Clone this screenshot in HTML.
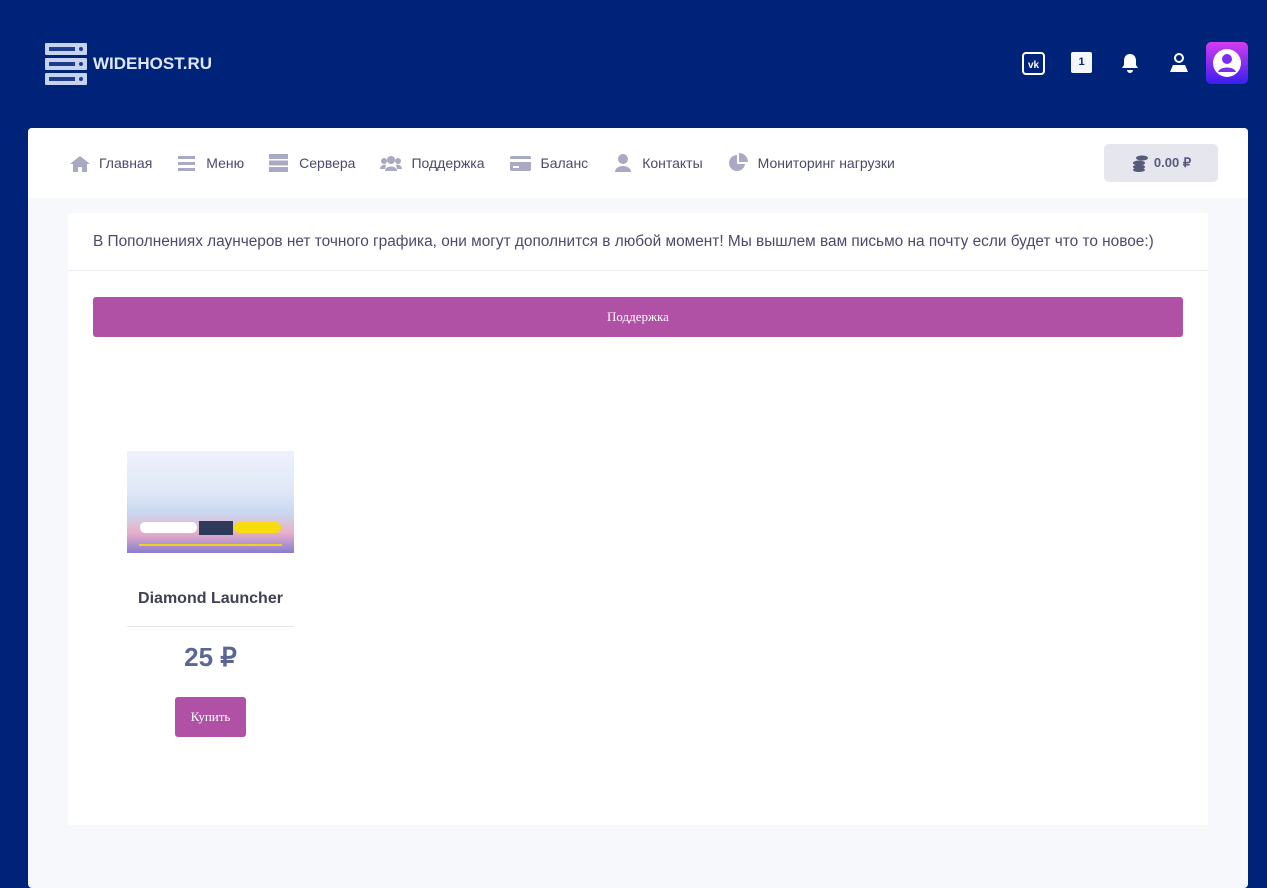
<!DOCTYPE html>
<html><head><meta charset="utf-8"><style>
*{box-sizing:border-box;margin:0;padding:0}
body{width:1267px;height:864px;background:#00237a;font-family:"Liberation Sans",sans-serif;position:relative;overflow:hidden}
.logo{position:absolute;left:45px;top:43px;display:flex;align-items:center}
.logo span{color:#dfe6f7;font-size:17px;font-weight:bold;margin-left:4px;letter-spacing:0}
.panel{position:absolute;left:28px;top:128px;width:1220px;height:760px;background:#f7f8fc;border-radius:4px}
.nav{height:70px;background:#fff;border-radius:4px 4px 0 0;display:flex;align-items:center;padding-left:42px}
.nav .it{display:flex;align-items:center;color:#4a4a6a;font-size:14px;margin-right:25px;white-space:nowrap}
.nav .it svg{margin-right:9px}
.bal{position:absolute;right:30px;top:16px;width:114px;height:38px;background:#e5e6ee;border-radius:5px;color:#575a7b;font-weight:bold;font-size:13px;display:flex;align-items:center;justify-content:center}
.card1{position:absolute;left:40px;top:85px;width:1140px;height:149px;background:#fff;border-radius:3px}
.card1 .t{height:58px;border-bottom:1px solid #ebedf2;padding:20px 25px;color:#4a4a6a;font-size:15.4px;white-space:nowrap}
.btn{position:absolute;left:25px;top:84px;width:1090px;height:40px;background:#b151a5;border-radius:3px;color:#fff;font-family:"Liberation Serif",serif;font-size:13px;text-align:center;line-height:40px}
.card2{position:absolute;left:40px;top:234px;width:1140px;height:463px;background:#fff}
.shot{position:absolute;left:59px;top:89px;width:167px;height:102px;background:linear-gradient(180deg,#eef1fb 0%,#dfe8f7 40%,#c8d8f0 60%,#e8b0c8 80%,#8a7cd0 100%)}
</style></head><body>
<div class="logo">
<svg width="44" height="42" viewBox="0 0 44 42"><g fill="#c6d3ef"><rect x="0" y="0" width="42" height="12" rx="1"/><rect x="0" y="15" width="42" height="12" rx="1"/><rect x="0" y="30" width="42" height="12" rx="1"/></g><g fill="#1f3b8c"><rect x="4" y="4" width="26" height="4"/><rect x="4" y="19" width="26" height="4"/><rect x="4" y="34" width="26" height="4"/><circle cx="36" cy="6" r="2"/><circle cx="36" cy="21" r="2"/><circle cx="36" cy="36" r="2"/></g></svg>
<span>WIDEHOST.RU</span></div>
<svg style="position:absolute;left:1022px;top:52px" width="23" height="23"><rect x="1" y="1" width="21" height="21" rx="3" fill="none" stroke="#fff" stroke-width="2"/><text x="11.5" y="16" font-size="10" font-weight="bold" fill="#fff" text-anchor="middle" font-family="Liberation Sans">vk</text></svg>
<div style="position:absolute;left:1071px;top:52px;width:21px;height:21px;background:#f4f6fb;border-radius:2px;color:#00237a;font-size:11px;font-weight:bold;text-align:center;line-height:21px">1</div>
<svg style="position:absolute;left:1121px;top:53px" width="18" height="20" viewBox="0 0 18 20"><path d="M9 1c-4 0-6 3-6 7v4l-2 3h16l-2-3V8c0-4-2-7-6-7z M6 17a3 3 0 0 0 6 0z" fill="#fff"/></svg>
<svg style="position:absolute;left:1169px;top:53px" width="20" height="20" viewBox="0 0 20 20"><circle cx="10" cy="5" r="4" fill="none" stroke="#fff" stroke-width="2"/><path d="M1 19l3-7h12l3 7z" fill="#fff"/></svg>
<div style="position:absolute;left:1206px;top:42px;width:42px;height:42px;border-radius:5px;background:linear-gradient(180deg,#d43cf0,#3a1ef0)"><svg width="42" height="42"><circle cx="21" cy="21" r="14" fill="#fff"/><circle cx="21" cy="17" r="5" fill="#7a2cf0"/><path d="M12 30c2-6 16-6 18 0z" fill="#7a2cf0"/></svg></div>
<div class="panel">
<div class="nav">
<div class="it"><svg width="20" height="17" viewBox="0 0 20 17"><path d="M10 1L0 9h3v8h5v-5h4v5h5V9h3z" fill="#a9a9c4"/></svg>Главная</div>
<div class="it"><svg width="20" height="16"><g fill="#a9a9c4"><rect x="1" y="1" width="17" height="3"/><rect x="1" y="7" width="17" height="3"/><rect x="1" y="13" width="17" height="3"/></g></svg>Меню</div>
<div class="it"><svg width="21" height="18"><g fill="#a9a9c4"><rect x="0" y="0" width="19" height="5"/><rect x="0" y="6.5" width="19" height="5"/><rect x="0" y="13" width="19" height="5"/></g></svg>Сервера</div>
<div class="it"><svg width="22" height="16"><g fill="#a9a9c4"><circle cx="11" cy="5" r="4"/><circle cx="4" cy="6" r="3"/><circle cx="18" cy="6" r="3"/><path d="M5 16c0-6 12-6 12 0zM0 14c0-4 5-5 6-4l-1 4zM22 14c0-4-5-5-6-4l1 4z"/></g></svg>Поддержка</div>
<div class="it"><svg width="22" height="16"><rect x="0" y="1" width="21" height="15" rx="2" fill="#a9a9c4"/><rect x="0" y="4" width="21" height="3" fill="#fff"/><rect x="3" y="11" width="6" height="2" fill="#fff"/></svg>Баланс</div>
<div class="it"><svg width="20" height="18"><circle cx="10" cy="5" r="5" fill="#a9a9c4"/><path d="M2 18c0-8 16-8 16 0z" fill="#a9a9c4"/></svg>Контакты</div>
<div class="it"><svg width="21" height="20"><path d="M9 2a8 8 0 1 0 8 9H9z" fill="#a9a9c4"/><path d="M11 0v9h9a9 9 0 0 0-9-9z" fill="#a9a9c4"/></svg>Мониторинг нагрузки</div>
<div class="bal"><svg width="18" height="18" style="margin-right:5px"><g fill="#575a7b"><ellipse cx="11" cy="4" rx="6" ry="2.5"/><ellipse cx="8" cy="9" rx="6" ry="2.5"/><ellipse cx="8" cy="13" rx="6" ry="2.5"/><ellipse cx="8" cy="16" rx="6" ry="2"/></g></svg>0.00 ₽</div>
</div>
<div class="card1"><div class="t">В Пополнениях лаунчеров нет точного графика, они могут дополнится в любой момент! Мы вышлем вам письмо на почту если будет что то новое:)</div><div class="btn">Поддержка</div></div>
<div class="card2">
<div class="shot"><div style="position:absolute;left:13px;top:71px;width:57px;height:11px;background:#fff;border-radius:5px"></div><div style="position:absolute;left:72px;top:70px;width:34px;height:14px;background:#2f3a5a"></div><div style="position:absolute;left:107px;top:71px;width:47px;height:11px;background:#f7dc10;border-radius:5px"></div><div style="position:absolute;left:12px;top:93px;width:143px;height:2px;background:#f2d020"></div></div>
<div style="position:absolute;left:59px;top:228px;width:167px;text-align:center;font-weight:bold;font-size:16px;color:#3f4054">Diamond Launcher</div>
<div style="position:absolute;left:59px;top:264px;width:167px;height:1px;background:#e6e6ee"></div>
<div style="position:absolute;left:59px;top:280px;width:167px;text-align:center;font-weight:bold;font-size:26px;color:#5b6694">25 ₽</div>
<div style="position:absolute;left:107px;top:335px;width:71px;height:40px;background:#b151a5;border-radius:3px;color:#fff;font-family:'Liberation Serif',serif;font-size:13px;text-align:center;line-height:40px">Купить</div>
</div>
</div>
</body></html>
